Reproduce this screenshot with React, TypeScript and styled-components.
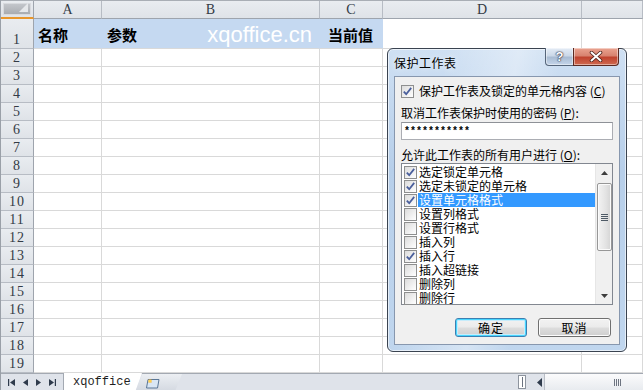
import React from "react";
import styled, { createGlobalStyle, css } from "styled-components";

const GlobalStyle = createGlobalStyle`
  html, body { margin: 0; padding: 0; background: #ffffff; }
  body { width: 643px; height: 390px; overflow: hidden; }
  * { box-sizing: border-box; }
`;

const MONO = `"Liberation Mono", "DejaVu Sans Mono", monospace`;
const SERIF = `"Liberation Serif", "DejaVu Serif", serif`;
const CJK = `"Noto Sans CJK SC", "Noto Sans", sans-serif`;

const Page = styled.div`
  position: relative;
  width: 643px;
  height: 390px;
  overflow: hidden;
  display: flex;
  flex-direction: column;
  background: #ffffff;
  border-left: 1px solid #9aa0a8;
`;

const Sheet = styled.div`
  display: grid;
  grid-template-columns: 33px 68px 218px 63px 199px 1fr;
  grid-template-rows: 18px 30px repeat(18, 18px);
  border-top: 1px solid #a9aeb5;
`;

const headerBase = css`
  background: linear-gradient(#e9ecf0, #dfe3e8);
  font-family: ${SERIF};
  font-size: 14px;
  color: #333b45;
  display: flex;
  justify-content: center;
`;

const Corner = styled.div`
  ${headerBase};
  border-right: 1px solid #9ea4ad;
  border-bottom: 2px solid #e8962c;
  padding: 2px;
`;

const CornerInner = styled.div`
  width: 100%;
  height: 100%;
  background: linear-gradient(#c3c6cb, #a9acb1);
  position: relative;
  border: 1px solid #d8dade;
  &::after {
    content: "";
    position: absolute;
    right: 2px;
    bottom: 2px;
    width: 0;
    height: 0;
    border-left: 9px solid transparent;
    border-bottom: 9px solid #e6e8eb;
  }
`;

const ColHeader = styled.div`
  ${headerBase};
  align-items: center;
  border-right: 1px solid #b7bcc4;
  border-bottom: 1px solid #9ea4ad;
  line-height: 16px;
`;

const RowHeader = styled.div`
  ${headerBase};
  align-items: flex-end;
  border-right: 1px solid #9ea4ad;
  border-bottom: 1px solid #b7bcc4;
  line-height: 16px;
  letter-spacing: 1px;
`;

const Cell = styled.div<{ $fill?: boolean; $align?: "start" | "end" }>`
  border-right: 1px solid ${(p) => (p.$fill ? "#c5d9f1" : "#d9d9d9")};
  border-bottom: 1px solid #d9d9d9;
  background: ${(p) => (p.$fill ? "#c5d9f1" : "#ffffff")};
  display: flex;
  align-items: center;
  justify-content: ${(p) => (p.$align === "end" ? "flex-end" : "flex-start")};
  padding: ${(p) => (p.$align === "end" ? "0 7px 0 0" : "0 0 0 4px")};
  overflow: visible;
  white-space: nowrap;
`;

const HeadText = styled.span<{ $indent?: number; $push?: boolean }>`
  font-family: ${CJK};
  font-weight: 700;
  font-size: 15px;
  line-height: 18px;
  color: #000;
  padding-top: 2px;
  margin-left: ${(p) => p.$indent ?? 0}px;
  margin-right: ${(p) => (p.$push ? "auto" : "0")};
`;

const Watermark = styled.span`
  font-family: "Liberation Sans", Arial, sans-serif;
  font-size: 22px;
  color: #ffffff;
  padding-top: 2px;
`;

/* ---------- bottom tab bar ---------- */

const TabBar = styled.div`
  height: 18px;
  display: flex;
  align-items: stretch;
  background: #dfe3ea;
  border-top: 1px solid #a3a9b2;
  border-bottom: 1px solid #a3a9b2;
`;

const NavGroup = styled.div`
  width: 63px;
  display: flex;
  align-items: center;
  justify-content: space-around;
  padding: 0 4px;
  border-right: 1px solid #a3a9b2;
`;

const NavArrow = styled.svg`
  width: 9px;
  height: 9px;
  display: block;
`;

const SheetTab = styled.div`
  width: 78px;
  height: 17px;
  margin-top: -1px;
  font-family: ${MONO};
  font-size: 12px;
  color: #1f1f1f;
  display: flex;
  align-items: center;
  padding-left: 9px;
  background: #ffffff;
  clip-path: polygon(0 0, 100% 0, 92% 100%, 0 100%);
`;

const NewTab = styled.div`
  width: 46px;
  display: flex;
  align-items: center;
  padding-left: 9px;
  margin-left: -6px;
  background: linear-gradient(#eceff3, #d5dae2);
  clip-path: polygon(14% 0, 100% 0, 86% 100%, 0 100%);
`;

const Spacer = styled.div`
  flex: 1;
`;

const Splitter = styled.div`
  width: 8px;
  margin: 1px 8px 1px 0;
  background: #ffffff;
  border: 1px solid #8d949e;
  display: flex;
  justify-content: center;
  align-items: center;
  &::after {
    content: "";
    width: 1px;
    height: 10px;
    background: #6b7380;
  }
`;

const HArrow = styled.div`
  width: 10px;
  display: flex;
  align-items: center;
  justify-content: center;
`;

const HTrack = styled.div`
  width: 99px;
  border-left: 1px solid #b9bec6;
  background: linear-gradient(#fbfbfc, #e8ebef);
  display: flex;
  align-items: center;
  padding-left: 69px;
`;

const Grip = styled.div`
  display: flex;
  gap: 1px;
  span {
    width: 1px;
    height: 7px;
    background: #6d7480;
  }
`;

/* ---------- dialog ---------- */

const Dialog = styled.div`
  position: absolute;
  left: 386px;
  top: 48px;
  width: 240px;
  height: 304px;
  border: 1px solid #3a4350;
  border-radius: 6px;
  background:
    linear-gradient(100deg, rgba(255,255,255,0) 20%, rgba(255,255,255,0.35) 45%, rgba(255,255,255,0) 60%),
    linear-gradient(180deg, #cfe0f3 0%, #b7cfea 40%, #c0d6ee 100%);
  box-shadow: inset 0 0 0 1px rgba(255, 255, 255, 0.6);
  display: flex;
  flex-direction: column;
  font-family: ${CJK};
  font-size: 12px;
  color: #000;
`;

const TitleBar = styled.div`
  height: 27px;
  display: flex;
  justify-content: space-between;
  align-items: flex-start;
  padding-left: 6px;
`;

const Title = styled.div`
  align-self: center;
  font-size: 12px;
  letter-spacing: 0.5px;
  line-height: 16px;
  padding-top: 1px;
  color: #000;
  text-shadow: 0 0 6px rgba(255, 255, 255, 0.9);
`;

const Caption = styled.div`
  display: flex;
  margin-top: -1px;
  margin-right: 7px;
`;

const CaptionButton = styled.div<{ $close?: boolean }>`
  height: 18px;
  width: ${(p) => (p.$close ? "46px" : "29px")};
  border: 1px solid ${(p) => (p.$close ? "#5b2a22" : "#55657a")};
  border-top: none;
  border-radius: ${(p) => (p.$close ? "0 0 4px 0" : "0 0 0 4px")};
  margin-left: ${(p) => (p.$close ? "-1px" : "0")};
  display: flex;
  align-items: center;
  justify-content: center;
  background: ${(p) =>
    p.$close
      ? "linear-gradient(#eaa390 0%, #d88370 45%, #c0432f 55%, #cf6a50 100%)"
      : "linear-gradient(#e4ecf6 0%, #cbd8e8 45%, #a9bcd3 55%, #c4d5ea 100%)"};
  box-shadow: inset 0 0 0 1px rgba(255, 255, 255, 0.45);
`;

const HelpGlyph = styled.span`
  font-family: "Liberation Sans", Arial, sans-serif;
  font-weight: 700;
  font-size: 13px;
  line-height: 14px;
  color: #ffffff;
  text-shadow: 0 0 1px #334, 0 0 1px #334, 0 0 2px #334;
`;

const Panel = styled.div`
  flex: 1;
  margin: 0 6px 6px 6px;
  background: #f0f0f0;
  border: 1px solid #8797ae;
  padding: 6px 6px 0 6px;
  display: flex;
  flex-direction: column;
`;

const CheckRow = styled.div`
  height: 16px;
  display: flex;
  align-items: center;
  gap: 5px;
  line-height: 16px;
  white-space: nowrap;
`;

const Box = styled.div`
  width: 13px;
  height: 13px;
  flex: none;
  border: 1px solid #8e8f8f;
  background: linear-gradient(135deg, #dcdcdc, #ffffff);
  padding: 1px;
  display: flex;
  align-items: center;
  justify-content: center;
`;

const Label = styled.div<{ $gap: number }>`
  margin-top: ${(p) => p.$gap}px;
  height: 16px;
  line-height: 16px;
  white-space: nowrap;
`;

const Key = styled.span`
  text-decoration: underline;
`;

const PasswordInput = styled.div`
  margin-top: 1px;
  height: 18px;
  background: #ffffff;
  border: 1px solid #abadb3;
  border-top-color: #8e9197;
  font-family: ${MONO};
  font-size: 10px;
  font-weight: 700;
  line-height: 18px;
  padding-left: 2px;
`;

const ListBox = styled.div`
  height: 142px;
  background: #ffffff;
  border: 1px solid #828790;
  display: flex;
`;

const ListItems = styled.div`
  flex: 1;
  padding-top: 1px;
  display: flex;
  flex-direction: column;
`;

const ListItem = styled.div`
  height: 14px;
  display: flex;
  align-items: center;
  padding-left: 2px;
`;

const ItemLabel = styled.span<{ $selected?: boolean }>`
  flex: 1;
  height: 14px;
  margin-left: 1px;
  padding-left: 1px;
  font-size: 12px;
  line-height: 14px;
  white-space: nowrap;
  background: ${(p) => (p.$selected ? "#3399ff" : "transparent")};
  color: ${(p) => (p.$selected ? "#ffffff" : "#000000")};
`;

const ScrollBar = styled.div`
  width: 17px;
  background: #f0f0f0;
  border-left: 1px solid #e6e6e6;
  display: flex;
  flex-direction: column;
  align-items: center;
`;

const ScrollArrow = styled.div`
  height: 17px;
  width: 17px;
  display: flex;
  align-items: center;
  justify-content: center;
`;

const Thumb = styled.div`
  margin-top: 2px;
  width: 15px;
  height: 68px;
  border: 1px solid #979797;
  border-radius: 2px;
  background: linear-gradient(90deg, #f3f3f3, #e3e3e3 60%, #d4d4d4);
  box-shadow: inset 0 0 0 1px #fbfbfb;
  display: flex;
  flex-direction: column;
  align-items: center;
  justify-content: center;
  gap: 1px;
  span {
    width: 7px;
    height: 1px;
    background: #4e5a66;
  }
`;

const ScrollFill = styled.div`
  flex: 1;
`;

const ButtonRow = styled.div`
  margin-top: 13px;
  display: flex;
  justify-content: flex-end;
  gap: 11px;
  padding-right: 2px;
`;

const PushButton = styled.div<{ $default?: boolean }>`
  width: ${(p) => (p.$default ? "72px" : "73px")};
  height: 19px;
  border: 1px solid ${(p) => (p.$default ? "#3c7fb1" : "#707070")};
  border-radius: 3px;
  background: linear-gradient(#f2f2f2 0%, #ebebeb 48%, #dddddd 52%, #cfcfcf 100%);
  box-shadow: ${(p) =>
    p.$default ? "inset 0 0 0 1px #48d6ff, inset 0 0 0 2px #c7ecfb" : "inset 0 0 0 1px #fcfcfc"};
  display: flex;
  align-items: center;
  justify-content: center;
  line-height: 16px;
  letter-spacing: 1px;
`;

/* ---------- icons ---------- */

const Check = () => (
  <svg width="9" height="9" viewBox="0 0 9 9">
    <path d="M0.8 4.6 L3.2 7.2 L8.2 0.9" fill="none" stroke="#4a5f9c" strokeWidth="1.8" />
  </svg>
);

const CloseX = () => (
  <svg width="14" height="11" viewBox="0 0 14 11">
    <path d="M2.5 1.5 L11.5 9.5 M11.5 1.5 L2.5 9.5" stroke="#4a2018" strokeWidth="3.6" strokeLinecap="round" />
    <path d="M2.5 1.5 L11.5 9.5 M11.5 1.5 L2.5 9.5" stroke="#ffffff" strokeWidth="2" strokeLinecap="round" />
  </svg>
);

const Tri = ({ dir }: { dir: "up" | "down" }) => (
  <svg width="7" height="4" viewBox="0 0 7 4">
    <path d={dir === "up" ? "M0 4 L3.5 0 L7 4 Z" : "M0 0 L7 0 L3.5 4 Z"} fill="#3d3d3d" />
  </svg>
);

const navPaths: Record<string, string> = {
  first: "M1 1 H2.2 V8 H1 Z M8 1 L3 4.5 L8 8 Z",
  prev: "M7 1 L2 4.5 L7 8 Z",
  next: "M2 1 L7 4.5 L2 8 Z",
  last: "M1 1 L6 4.5 L1 8 Z M6.8 1 H8 V8 H6.8 Z",
};

const NewSheetIcon = () => (
  <svg width="16" height="13" viewBox="0 0 16 13">
    <path d="M3 3.5 H14 L12.5 12 H1.5 Z" fill="#d9e6f4" stroke="#5a7797" strokeWidth="1" />
    <path d="M4 5 L6 5 M5 4 L5 6 M3.6 3.6 L6.4 6.4 M6.4 3.6 L3.6 6.4" stroke="#f39a1d" strokeWidth="1.2" />
    <circle cx="5" cy="5" r="1.6" fill="#ffd24a" />
  </svg>
);

/* ---------- data ---------- */

const items: { label: string; checked: boolean; selected?: boolean }[] = [
  { label: "选定锁定单元格", checked: true },
  { label: "选定未锁定的单元格", checked: true },
  { label: "设置单元格格式", checked: true, selected: true },
  { label: "设置列格式", checked: false },
  { label: "设置行格式", checked: false },
  { label: "插入列", checked: false },
  { label: "插入行", checked: true },
  { label: "插入超链接", checked: false },
  { label: "删除列", checked: false },
  { label: "删除行", checked: false },
];

const columns = ["A", "B", "C", "D", ""];

export default function App() {
  const rows = Array.from({ length: 18 }, (_, i) => i + 2);
  return (
    <>
      <GlobalStyle />
      <Page>
        <Sheet>
          <Corner>
            <CornerInner />
          </Corner>
          {columns.map((c, i) => (
            <ColHeader key={"h" + i}>{c}</ColHeader>
          ))}

          <RowHeader>1</RowHeader>
          <Cell $fill>
            <HeadText>名称</HeadText>
          </Cell>
          <Cell $fill $align="end">
            <HeadText $indent={5} $push>
              参数
            </HeadText>
            <Watermark>xqoffice.cn</Watermark>
          </Cell>
          <Cell $fill>
            <HeadText $indent={4}>当前值</HeadText>
          </Cell>
          <Cell />
          <Cell />

          {rows.map((r) => (
            <React.Fragment key={r}>
              <RowHeader>{r}</RowHeader>
              <Cell />
              <Cell />
              <Cell />
              <Cell />
              <Cell />
            </React.Fragment>
          ))}
        </Sheet>

        <TabBar>
          <NavGroup>
            {["first", "prev", "next", "last"].map((k) => (
              <NavArrow key={k} viewBox="0 0 9 9">
                <path d={navPaths[k]} fill="#2f3b4c" />
              </NavArrow>
            ))}
          </NavGroup>
          <SheetTab>xqoffice</SheetTab>
          <NewTab>
            <NewSheetIcon />
          </NewTab>
          <Spacer />
          <Splitter />
          <HArrow>
            <svg width="5" height="9" viewBox="0 0 5 9">
              <path d="M5 0 L0 4.5 L5 9 Z" fill="#2f3b4c" />
            </svg>
          </HArrow>
          <HTrack>
            <Grip>
              <span />
              <span />
              <span />
              <span />
            </Grip>
          </HTrack>
        </TabBar>

        <Dialog>
          <TitleBar>
            <Title>保护工作表</Title>
            <Caption>
              <CaptionButton>
                <HelpGlyph>?</HelpGlyph>
              </CaptionButton>
              <CaptionButton $close>
                <CloseX />
              </CaptionButton>
            </Caption>
          </TitleBar>
          <Panel>
            <CheckRow>
              <Box>
                <Check />
              </Box>
              <span>
                保护工作表及锁定的单元格内容 (<Key>C</Key>)
              </span>
            </CheckRow>
            <Label $gap={6}>
              取消工作表保护时使用的密码 (<Key>P</Key>):
            </Label>
            <PasswordInput>***********</PasswordInput>
            <Label $gap={7}>
              允许此工作表的所有用户进行 (<Key>O</Key>):
            </Label>
            <ListBox>
              <ListItems>
                {items.map((it) => (
                  <ListItem key={it.label}>
                    <Box>{it.checked ? <Check /> : null}</Box>
                    <ItemLabel $selected={it.selected}>{it.label}</ItemLabel>
                  </ListItem>
                ))}
              </ListItems>
              <ScrollBar>
                <ScrollArrow>
                  <Tri dir="up" />
                </ScrollArrow>
                <Thumb>
                  <span />
                  <span />
                  <span />
                  <span />
                </Thumb>
                <ScrollFill />
                <ScrollArrow>
                  <Tri dir="down" />
                </ScrollArrow>
              </ScrollBar>
            </ListBox>
            <ButtonRow>
              <PushButton $default>确定</PushButton>
              <PushButton>取消</PushButton>
            </ButtonRow>
          </Panel>
        </Dialog>
      </Page>
    </>
  );
}
